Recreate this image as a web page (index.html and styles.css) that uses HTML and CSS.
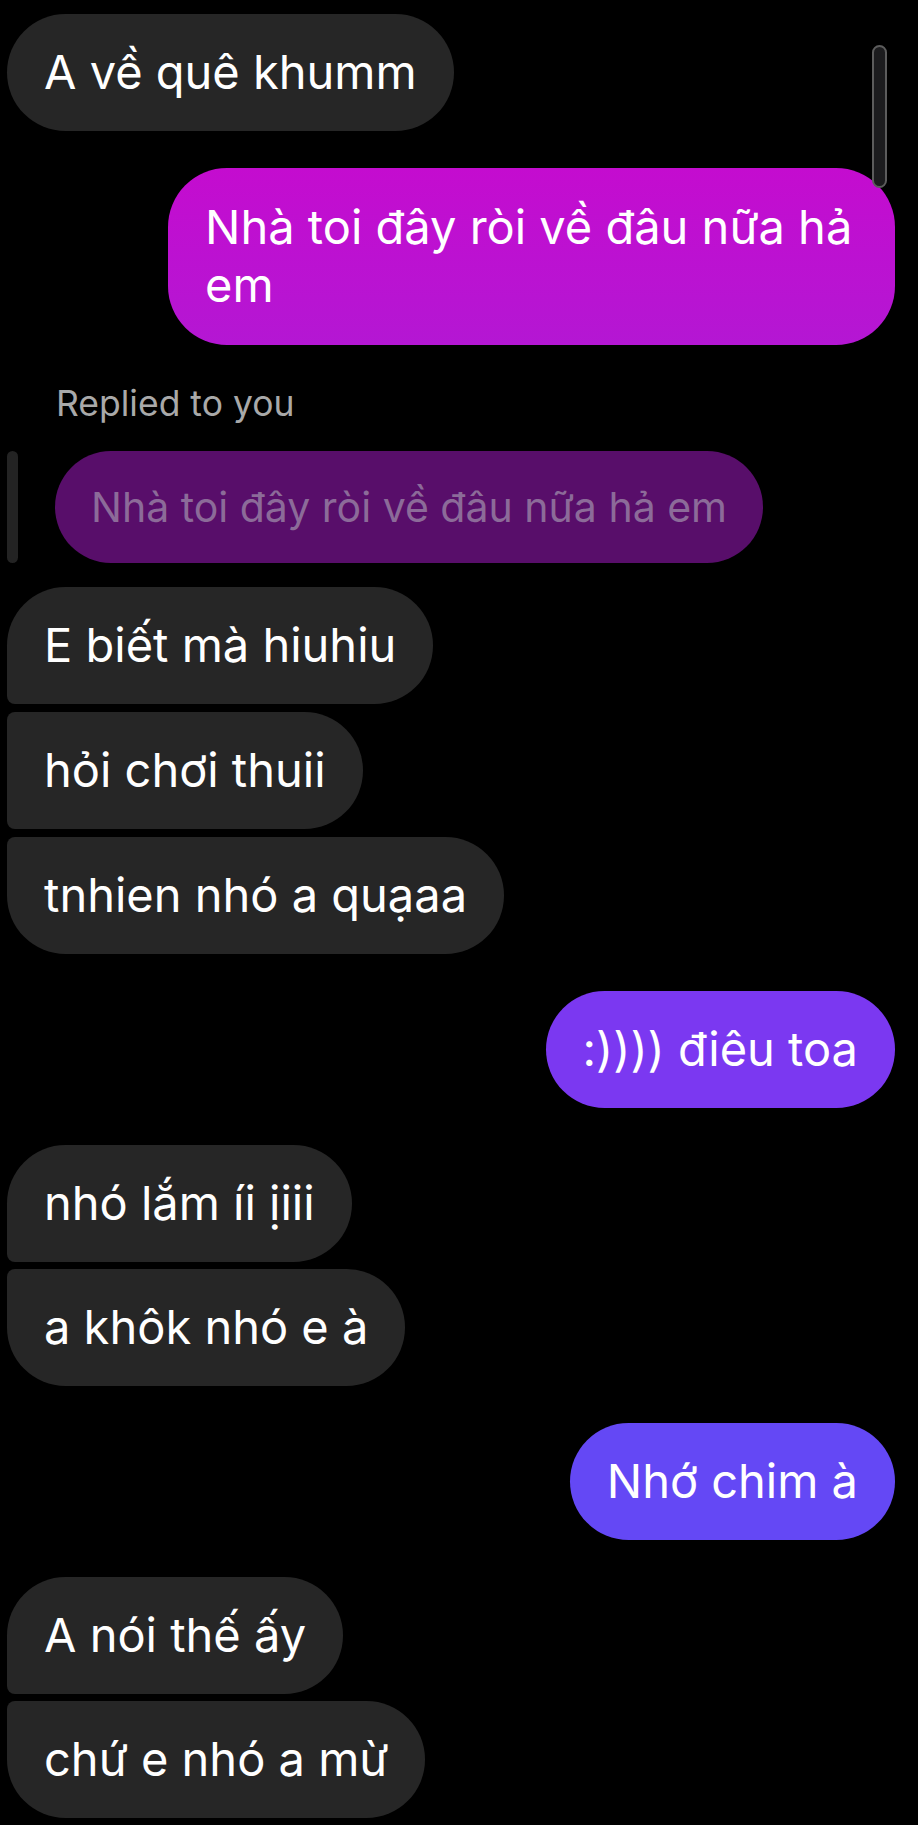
FILE: index.html
```html
<!DOCTYPE html>
<html lang="vi">
<head>
<meta charset="utf-8">
<title>Chat</title>
<link rel="stylesheet" href="styles.css">
</head>
<body>
<div class="chat">
  <div class="row in m-first"><div class="bubble recv solo">A về quê khumm</div></div>
  <div class="row out m-36"><div class="bubble sent magenta">Nhà toi đây ròi về đâu nữa hả em</div></div>
  <div class="reply-label">Replied to you</div>
  <div class="reply-row">
    <div class="reply-bar"></div>
    <div class="reply-bubble">Nhà toi đây ròi về đâu nữa hả em</div>
  </div>
  <div class="row in m-24"><div class="bubble recv g-first">E biết mà hiuhiu</div></div>
  <div class="row in m-8"><div class="bubble recv g-mid">hỏi chơi thuii</div></div>
  <div class="row in m-8"><div class="bubble recv g-last">tnhien nhó a quạaa</div></div>
  <div class="row out m-36"><div class="bubble sent violet">:)))) điêu toa</div></div>
  <div class="row in m-37"><div class="bubble recv g-first">nhó lắm íi ịiii</div></div>
  <div class="row in m-7"><div class="bubble recv g-last">a khôk nhó e à</div></div>
  <div class="row out m-37"><div class="bubble sent indigo">Nhớ chim à</div></div>
  <div class="row in m-37"><div class="bubble recv g-first">A nói thế ấy</div></div>
  <div class="row in m-7"><div class="bubble recv g-last">chứ e nhó a mừ</div></div>
  <div class="scrollbar"></div>
</div>
</body>
</html>
```
FILE: styles.css
```css
html, body {
  margin: 0;
  padding: 0;
  background: #000;
}
body {
  font-family: "Inter", "Roboto", "Noto Sans", sans-serif;
  color: #fff;
  width: 918px;
  height: 1825px;
  overflow: hidden;
}
.chat {
  position: relative;
  padding: 0 23px 0 7px;
  display: flex;
  flex-direction: column;
}
.row {
  display: flex;
}
.row.in { justify-content: flex-start; }
.row.out { justify-content: flex-end; }
.m-first { margin-top: 14px; }
.m-36 { margin-top: 37px; }
.m-37 { margin-top: 37px; }
.m-24 { margin-top: 24px; }
.m-8 { margin-top: 8px; }
.m-7 { margin-top: 7px; }

.bubble {
  font-size: 47px;
  line-height: 58px;
  padding: 29px 37px 30px;
  border-radius: 59px;
  max-width: 653px;
  box-sizing: content-box;
}
.recv { background: #262626; }
.sent { color: #fff; }
.magenta {
  background: linear-gradient(180deg, #c40ccf 0%, #b417d3 100%);
  padding-top: 30px;
  padding-bottom: 31px;
}
.violet { background: #7b38f1; }
.indigo { background: #6448f5; }

.g-first { border-radius: 59px 59px 59px 8px; }
.g-mid { border-radius: 8px 59px 59px 8px; }
.g-last { border-radius: 8px 59px 59px 59px; }

.reply-label {
  margin-top: 39px;
  margin-left: 49px;
  font-size: 35.5px;
  line-height: 40px;
  color: #a9a9a9;
}
.reply-row {
  display: flex;
  align-items: stretch;
  gap: 37px;
  margin-top: 27px;
}
.reply-bar {
  width: 11px;
  border-radius: 6px;
  background: #232323;
}
.reply-bubble {
  background: #580e6a;
  color: #8c6b99;
  font-size: 41px;
  line-height: 50px;
  padding: 31px 36px;
  border-radius: 56px;
}
.scrollbar {
  position: absolute;
  left: 872px;
  top: 45px;
  width: 11px;
  height: 139px;
  border: 2px solid #5c5c5c;
  border-radius: 9px;
  background: #1c1c1e;
}
```
